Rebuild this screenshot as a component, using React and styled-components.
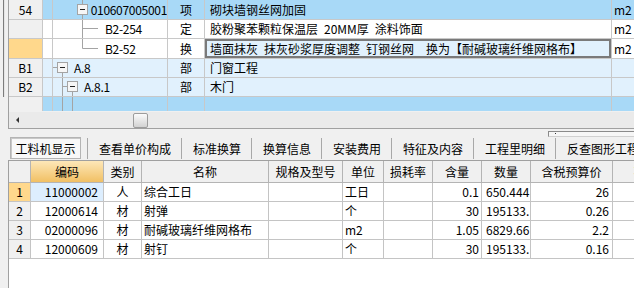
import React from 'react'
import styled, { createGlobalStyle } from 'styled-components'

const BLUE = '#a8d9f7'
const PALE = '#e1f1fd'
const ORANGE = '#ffd88c'
const HEAD = '#f0f0f0'

const GlobalStyle = createGlobalStyle`
  html, body { margin: 0; padding: 0; background: #f0f0f0; }
  body {
    font-family: "Noto Sans CJK SC", "Liberation Sans", sans-serif;
    font-size: 12px;
    color: #000;
  }
`

const topRows = [
  { no: '54', h: 20, bg: BLUE, tree: 'root', code: '010607005001', kind: '项', name: '砌块墙钢丝网加固', unit: 'm2' },
  { no: '', h: 19, bg: '#fff', tree: 'mid', code: 'B2-254', kind: '定', name: '胶粉聚苯颗粒保温层\u200220MM厚\u2002涂料饰面', unit: 'm2' },
  { no: '', h: 20, bg: '#fff', tree: 'last', code: 'B2-52', kind: '换', name: '墙面抹灰\u2002抹灰砂浆厚度调整\u2002钉钢丝网\u2003换为【耐碱玻璃纤维网格布】', unit: 'm2', current: true },
  { no: 'B1', h: 19, bg: PALE, tree: 'b1', code: 'A.8', kind: '部', name: '门窗工程', unit: '' },
  { no: 'B2', h: 19, bg: PALE, tree: 'b2', code: 'A.8.1', kind: '部', name: '木门', unit: '' },
]

const tabs = ['查看单价构成', '标准换算', '换算信息', '安装费用', '特征及内容', '工程里明细', '反查图形工程量']

const headers = ['', '编码', '类别', '名称', '规格及型号', '单位', '损耗率', '含量', '数量', '含税预算价', '不含税']

const items = [
  { code: '11000002', kind: '人', name: '综合工日', unit: '工日', rate: '0.1', qty: '650.444', price: '26' },
  { code: '12000614', kind: '材', name: '射弹', unit: '个', rate: '30', qty: '195133.', price: '0.26' },
  { code: '02000096', kind: '材', name: '耐碱玻璃纤维网格布', unit: 'm2', rate: '1.05', qty: '6829.66', price: '2.2' },
  { code: '12000609', kind: '材', name: '射钉', unit: '个', rate: '30', qty: '195133.', price: '0.16' },
]

function Box({ x, y }) {
  return (
    <g>
      <rect x={x} y={y} width="10" height="10" fill="#f6f6f6" stroke="#a4a4a4" />
      <line x1={x + 2.5} x2={x + 7.5} y1={y + 5} y2={y + 5} stroke="#222" />
    </g>
  )
}

function TreeMark({ type, h }) {
  const m = Math.round(h / 2) - 0.5
  const c = '#a4a4a4'
  if (type === 'root')
    return (
      <svg width="41" height={h}>
        <line x1="29.5" x2="29.5" y1="0" y2="5" stroke={c} />
        <line x1="29.5" x2="29.5" y1="15" y2={h} stroke={c} />
        <Box x={24.5} y={4.5} />
      </svg>
    )
  if (type === 'mid' || type === 'last')
    return (
      <svg width="51" height={h}>
        <line x1="29.5" x2="29.5" y1="0" y2={type === 'mid' ? h : m} stroke={c} />
        <line x1="29.5" x2="45" y1={m} y2={m} stroke={c} />
      </svg>
    )
  if (type === 'b1')
    return (
      <svg width="20" height={h}>
        <line x1="0" x2="4.5" y1={m} y2={m} stroke={c} />
        <line x1="9.5" x2="9.5" y1={m + 5} y2={h} stroke={c} />
        <Box x={4.5} y={m - 5} />
      </svg>
    )
  if (type === 'b2')
    return (
      <svg width="30" height={h}>
        <line x1="9.5" x2="9.5" y1="0" y2={h} stroke={c} />
        <line x1="9.5" x2="14.5" y1={m} y2={m} stroke={c} />
        <line x1="19.5" x2="19.5" y1={m + 5} y2={h} stroke={c} />
        <Box x={14.5} y={m - 5} />
      </svg>
    )
  return (
    <svg width="30" height={h}>
      <line x1="9.5" x2="9.5" y1="0" y2={h} stroke={c} />
      <line x1="19.5" x2="19.5" y1="0" y2={h} stroke={c} />
    </svg>
  )
}

function App() {
  return (
    <Shell>
      <GlobalStyle />
      <TopArea>
        <Gutter>
          <SplitLine />
        </Gutter>
        <TreePanel>
          {topRows.map((r, i) => (
            <TreeRow key={i} $h={r.h}>
              <Cell $bg={r.current ? ORANGE : HEAD} $align="center">{r.no}</Cell>
              <Cell $bg={r.bg} />
              <Cell $bg={r.bg} $pad={0}>
                <TreeMark type={r.tree} h={r.h - 1} />
                <Code>{r.code}</Code>
              </Cell>
              <Cell $bg={r.bg} $align="center">{r.kind}</Cell>
              {r.current ? (
                <FocusCell $bg={PALE} $pad={5}>{r.name}</FocusCell>
              ) : (
                <Cell $bg={r.bg} $pad={5}>{r.name}</Cell>
              )}
              <Cell $bg={r.current ? '#fff' : r.bg}>{r.unit}</Cell>
            </TreeRow>
          ))}
          <TreeRow $h={14}>
            <Cell $bg={HEAD} $flat />
            <Cell $bg={BLUE} $flat />
            <Cell $bg={BLUE} $pad={0} $flat>
              <TreeMark type="tail" h={14} />
            </Cell>
            <Cell $bg={BLUE} $flat />
            <Cell $bg={BLUE} $flat />
            <Cell $bg={BLUE} $flat />
          </TreeRow>
          <HScroll>
            <ArrowBtn>
              <LeftArrow />
            </ArrowBtn>
            <Track>
              <Thumb style={{ marginLeft: 107 }} />
            </Track>
          </HScroll>
        </TreePanel>
      </TopArea>

      <Strip>
        <Collapsed>
          <Dot />
        </Collapsed>
      </Strip>

      <TabBar>
        <ActiveTab>工料机显示</ActiveTab>
        {tabs.map((t) => (
          <Tab key={t}>{t}</Tab>
        ))}
      </TabBar>

      <BottomArea>
        <Gutter />
        <Grid>
          <HeadRow>
            {headers.map((h, i) => (
              <HeadCell key={i} $sorted={h === '编码'}>{h}</HeadCell>
            ))}
          </HeadRow>
          {items.map((it, i) => (
            <BodyRow key={it.code}>
              <Cell $bg={i === 0 ? ORANGE : HEAD} $align="center" $line="#c4c4c4">{i + 1}</Cell>
              <Cell $bg={i === 0 ? '#ddeefe' : '#fff'} $align="right" $pad={5} $line="#c4c4c4">{it.code}</Cell>
              <Cell $bg="#fff" $align="center" $line="#c4c4c4">{it.kind}</Cell>
              <Cell $bg="#fff" $line="#c4c4c4">{it.name}</Cell>
              <Cell $bg="#fff" $line="#c4c4c4" />
              <Cell $bg="#fff" $line="#c4c4c4">{it.unit}</Cell>
              <Cell $bg="#fff" $line="#c4c4c4" />
              <Cell $bg="#fff" $align="right" $line="#c4c4c4">{it.rate}</Cell>
              <Cell $bg="#fff" $pad={4} $line="#c4c4c4">{it.qty}</Cell>
              <Cell $bg="#fff" $align="right" $pad={3} $line="#c4c4c4">{it.price}</Cell>
              <Cell $bg="#fff" $line="#c4c4c4" />
            </BodyRow>
          ))}
        </Grid>
      </BottomArea>
    </Shell>
  )
}

const Shell = styled.div`
  width: 634px;
  height: 288px;
  overflow: hidden;
  display: flex;
  flex-direction: column;
  background: #f0f0f0;
`

const TopArea = styled.div`
  display: flex;
  height: 129px;
  flex-shrink: 0;
`

const Gutter = styled.div`
  width: 8px;
  flex-shrink: 0;
  display: flex;
`

const SplitLine = styled.div`
  width: 1px;
  height: 97px;
  margin-left: 3px;
  background: #7c7c7c;
  border-right: 1px solid #e4e4e4;
`

const TreePanel = styled.div`
  flex: 1;
  box-sizing: border-box;
  border-left: 1px solid #a0a0a0;
  border-bottom: 1px solid #a0a0a0;
  display: flex;
  flex-direction: column;
  overflow: hidden;
  min-width: 0;
`

const TreeRow = styled.div`
  display: grid;
  grid-template-columns: 34px 10px 115px 37px 407px 60px;
  height: ${(p) => p.$h}px;
  flex-shrink: 0;
`

const Cell = styled.div`
  box-sizing: border-box;
  height: 100%;
  min-width: 0;
  background: ${(p) => p.$bg || '#fff'};
  border-right: 1px solid ${(p) => p.$line || '#c8c8c8'};
  border-bottom: ${(p) => (p.$flat ? 'none' : `1px solid ${p.$line || '#c8c8c8'}`)};
  display: flex;
  align-items: center;
  justify-content: ${(p) => (p.$align === 'center' ? 'center' : p.$align === 'right' ? 'flex-end' : 'flex-start')};
  padding: 0 ${(p) => (p.$pad ?? 2)}px;
  white-space: nowrap;
  overflow: hidden;
  line-height: 1;
`

const FocusCell = styled(Cell)`
  box-shadow: inset 0 0 0 2px #7a7a7a;
`

const Code = styled.span`
  margin-left: 1px;
  letter-spacing: -0.3px;
`

const HScroll = styled.div`
  height: 17px;
  margin-top: 1px;
  display: flex;
  background: #eaeaea;
`

const ArrowBtn = styled.div`
  width: 17px;
  display: flex;
  align-items: center;
  justify-content: center;
`

const LeftArrow = styled.div`
  width: 0;
  height: 0;
  border-top: 3px solid transparent;
  border-bottom: 3px solid transparent;
  border-right: 3px solid #333;
`

const Track = styled.div`
  flex: 1;
  display: flex;
  align-items: center;
`

const Thumb = styled.div`
  box-sizing: border-box;
  width: 15px;
  height: 15px;
  border: 1px solid #9c9c9c;
  border-radius: 2px;
  background: linear-gradient(#fbfbfb, #d2d2d2);
`

const Strip = styled.div`
  height: 8px;
  display: flex;
  justify-content: flex-end;
  align-items: flex-end;
  flex-shrink: 0;
`

const Collapsed = styled.div`
  box-sizing: border-box;
  width: 86px;
  height: 6px;
  border: 1px solid #8a8a8a;
  border-right: none;
  border-bottom-color: #d0d0d0;
  background: #f6f6f6;
  position: relative;
`

const Dot = styled.div`
  position: absolute;
  left: 6px;
  top: 1px;
  width: 1px;
  height: 1px;
  background: #333;
`

const TabBar = styled.div`
  height: 22px;
  display: flex;
  align-items: stretch;
  padding-left: 10px;
  white-space: nowrap;
  flex-shrink: 0;
`

const ActiveTab = styled.div`
  box-sizing: border-box;
  width: 71px;
  flex-shrink: 0;
  margin-right: 6px;
  display: flex;
  align-items: center;
  justify-content: center;
  background: #f8f8f8;
  border: 1px solid;
  border-color: #7c7c7c #ffffff #ffffff #7c7c7c;
  box-shadow: inset 1px 1px 0 #c8c8c8;
  outline: 1px solid #b4b4b4;
  outline-offset: -1px;
`

const Tab = styled.div`
  display: flex;
  align-items: center;
  padding: 0 10px 0 11px;
  margin: 1px 0 0;
  border-left: 1px solid #a8a8a8;
  flex-shrink: 0;
`

const BottomArea = styled.div`
  flex: 1;
  display: flex;
  margin-top: 1px;
  min-height: 0;
`

const Grid = styled.div`
  flex: 1;
  min-width: 0;
  border-left: 1px solid #a0a0a0;
  border-top: 1px solid #a0a0a0;
  background: #fff;
  overflow: hidden;
`

const COLS = '22px 73px 38px 127px 74px 41px 49px 49px 49px 82px 78px'

const HeadRow = styled.div`
  display: grid;
  grid-template-columns: ${COLS};
  height: 22px;
`

const HeadCell = styled.div`
  box-sizing: border-box;
  background: ${(p) => (p.$sorted ? 'linear-gradient(#fde7b8, #f1c064)' : '#f0f0f0')};
  border-right: 1px solid #b4b4b4;
  border-bottom: 1px solid #b4b4b4;
  display: flex;
  align-items: center;
  justify-content: ${(p) => (p.$sorted || p.children ? 'center' : 'center')};
  white-space: nowrap;
  overflow: hidden;
`

const BodyRow = styled.div`
  display: grid;
  grid-template-columns: ${COLS};
  height: 19px;
`

export default App
